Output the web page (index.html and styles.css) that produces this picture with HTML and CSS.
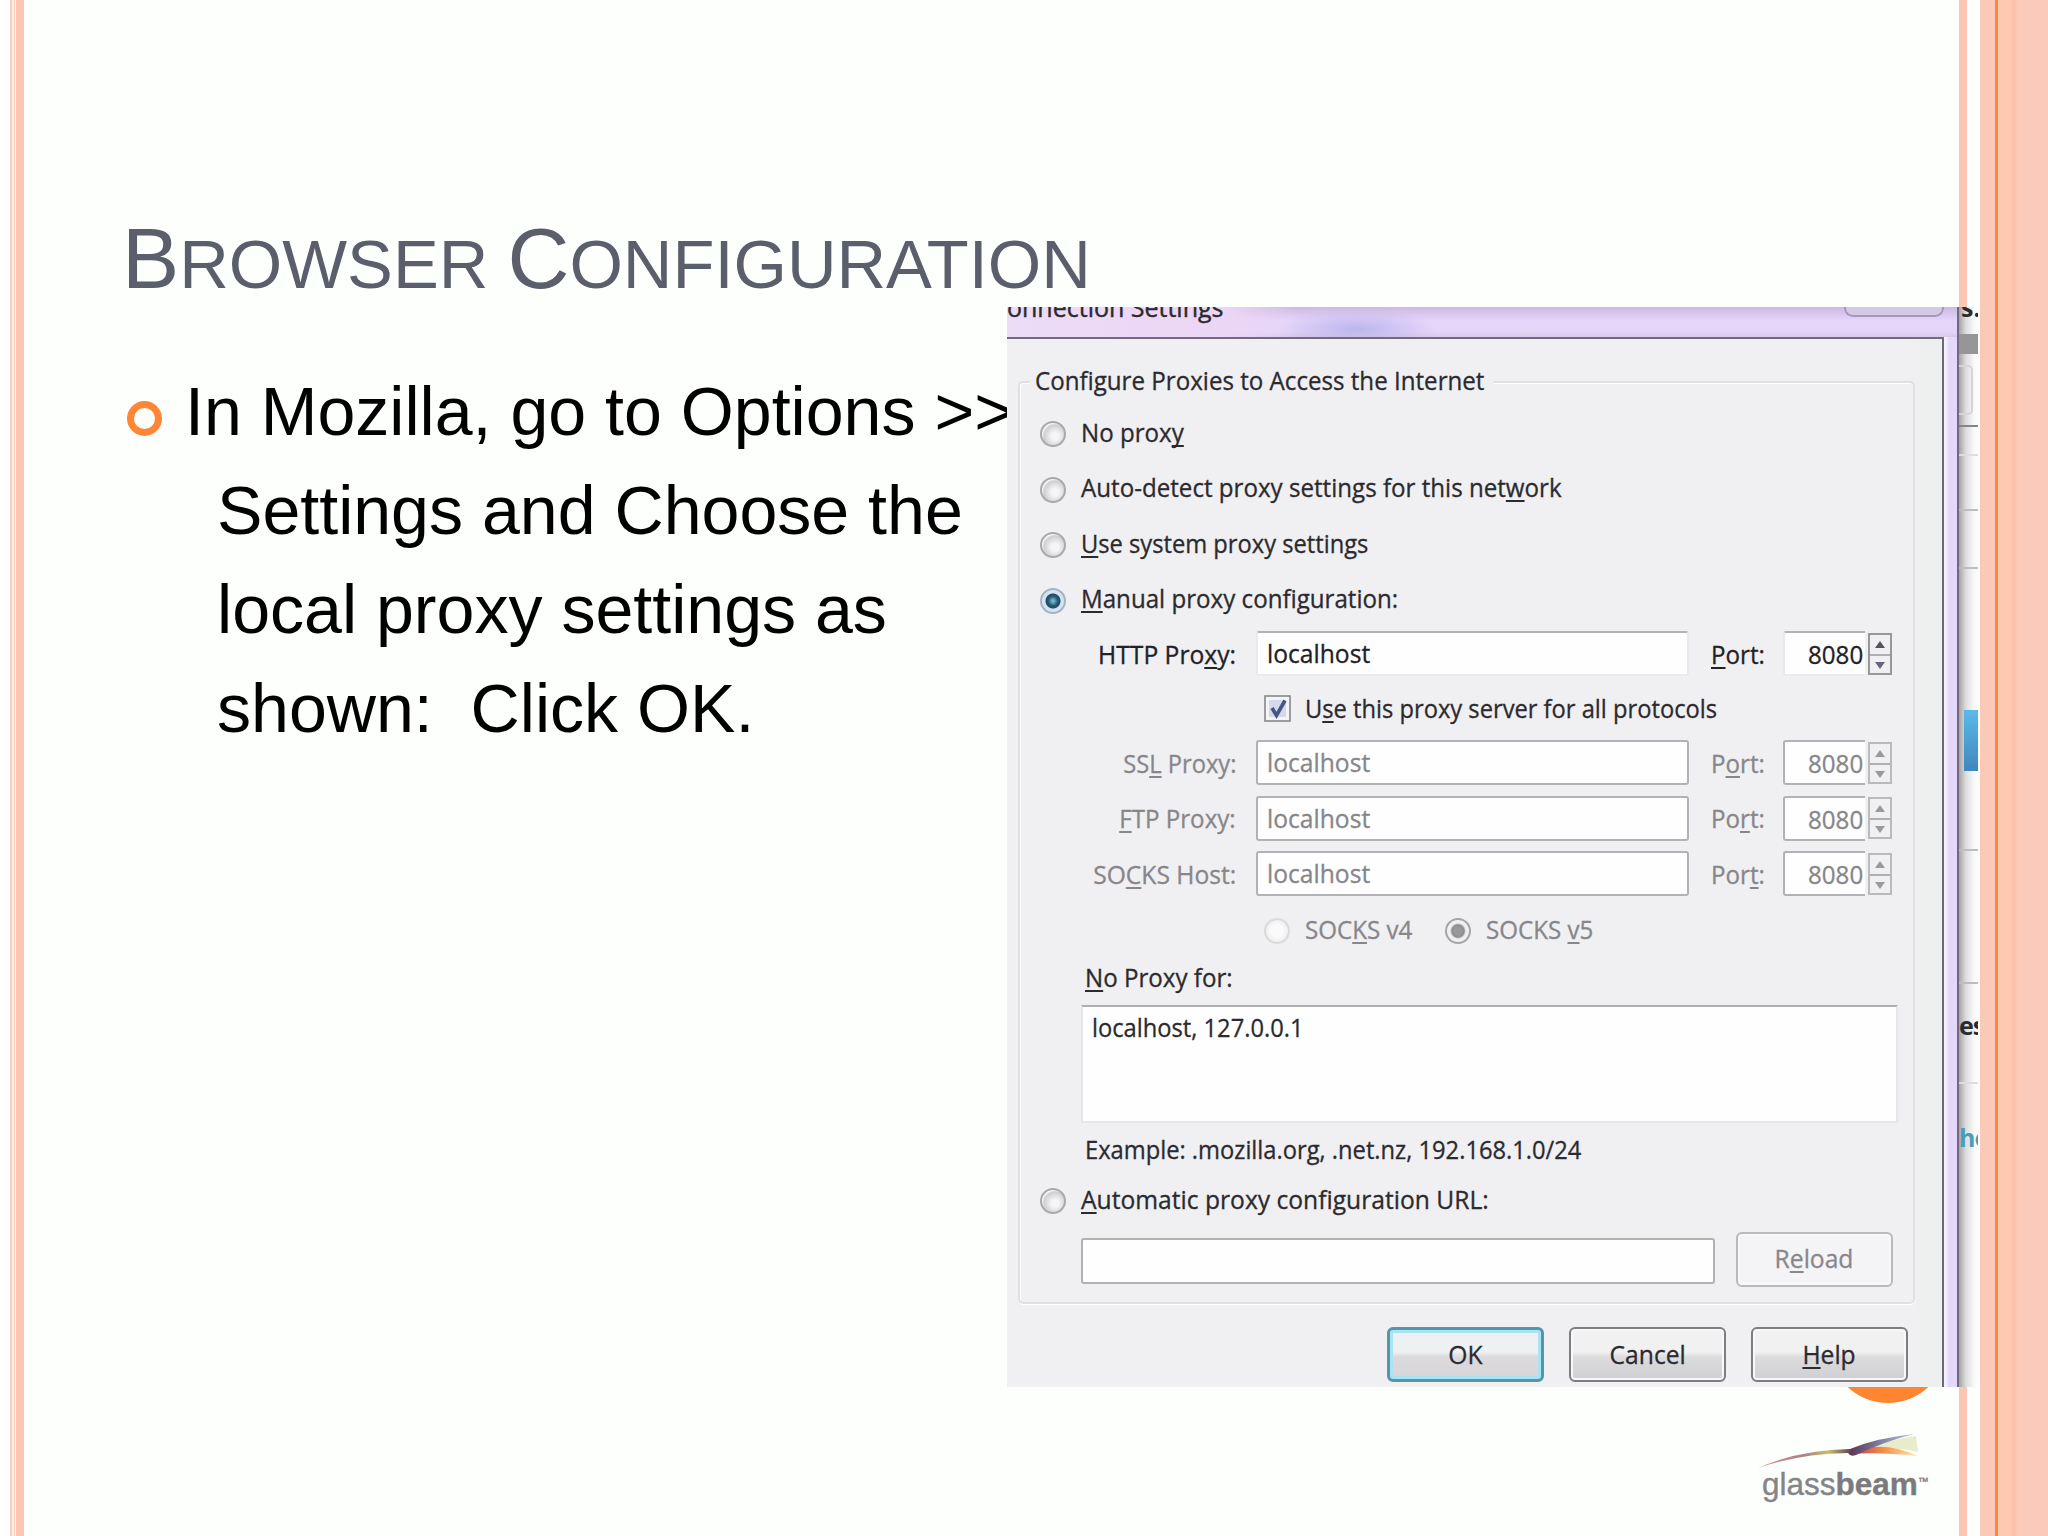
FILE: index.html
```html
<!DOCTYPE html>
<html lang="en">
<head>
  <meta charset="UTF-8" />
  <title>Browser Configuration</title>
  <link rel="stylesheet" href="styles.css">
</head>
<body>

  <div class="slide">
    <div class="edge-left"><i></i><i></i></div>

    <div class="content">
      <h1><b>B</b>ROWSER <b>C</b>ONFIGURATION</h1>
      <ul>
        <li>In Mozilla, go to Options &gt;&gt;<br>Settings and Choose the<br>local proxy settings as<br>shown:&nbsp; Click OK.</li>
      </ul>
    </div>

    <div class="edge-right"><i class="thin"></i><i class="band"></i><i class="line"></i><i class="band2"></i><i class="band3"></i></div>

    <div class="dot"></div>

    <div class="shot">
      <div class="window">
        <div class="titlebar"><span class="title">onnection Settings</span><span class="close"></span></div>
        <div class="client">
          <div class="group">
            <div class="legend"><span class="t">Configure Proxies to Access the Internet</span></div>
            <div class="row"><i class="radio"></i><span class="t">No prox<u>y</u></span></div>
            <div class="row"><i class="radio"></i><span class="t">Auto-detect proxy settings for this net<u>w</u>ork</span></div>
            <div class="row"><i class="radio"></i><span class="t narrow"><u>U</u>se system proxy settings</span></div>
            <div class="row"><i class="radio on"></i><span class="t"><u>M</u>anual proxy configuration:</span></div>

            <div class="row proxy active">
              <span class="label"><span class="t wide">HTTP Pro<u>x</u>y:</span></span>
              <div class="input"><span class="t wide">localhost</span></div>
              <span class="port"><span class="t"><u>P</u>ort:</span></span>
              <div class="num"><span class="t">8080</span></div>
              <div class="spin"><i></i><i></i></div>
            </div>
            <div class="row check">
              <svg class="box" viewBox="0 0 27 27"><rect x="1" y="1" width="25" height="25" fill="#f4f4f6" stroke="#85888f" stroke-width="1.6"/><rect x="5" y="5" width="17" height="17" fill="#d3d9e6"/><path d="M8 13l4.500 7.500L21 5.500" fill="none" stroke="#47538b" stroke-width="3.600"/></svg>
              <span class="t narrow">U<u>s</u>e this proxy server for all protocols</span>
            </div>
            <div class="row proxy">
              <span class="label"><span class="t narrow">SS<u>L</u> Proxy:</span></span>
              <div class="input"><span class="t wide">localhost</span></div>
              <span class="port"><span class="t">P<u>o</u>rt:</span></span>
              <div class="num"><span class="t">8080</span></div>
              <div class="spin"><i></i><i></i></div>
            </div>
            <div class="row proxy">
              <span class="label"><span class="t"><u>F</u>TP Proxy:</span></span>
              <div class="input"><span class="t wide">localhost</span></div>
              <span class="port"><span class="t">Po<u>r</u>t:</span></span>
              <div class="num"><span class="t">8080</span></div>
              <div class="spin"><i></i><i></i></div>
            </div>
            <div class="row proxy">
              <span class="label"><span class="t wide">SO<u>C</u>KS Host:</span></span>
              <div class="input"><span class="t wide">localhost</span></div>
              <span class="port"><span class="t">Por<u>t</u>:</span></span>
              <div class="num"><span class="t">8080</span></div>
              <div class="spin"><i></i><i></i></div>
            </div>
            <div class="row socks">
              <div class="option"><i class="radio faint"></i><span class="t">SOC<u>K</u>S v4</span></div>
              <div class="option"><i class="radio off-on"></i><span class="t">SOCKS <u>v</u>5</span></div>
            </div>

            <div class="row nofor"><span class="t"><u>N</u>o Proxy for:</span></div>
            <div class="textarea"><span class="t narrow">localhost, 127.0.0.1</span></div>
            <div class="row example"><span class="t narrow">Example: .mozilla.org, .net.nz, 192.168.1.0/24</span></div>
            <div class="row auto"><i class="radio"></i><span class="t wide"><u>A</u>utomatic proxy configuration URL:</span></div>
            <div class="row url">
              <div class="input"></div>
              <div class="btn disabled"><span class="t wide">R<u>e</u>load</span></div>
            </div>
          </div>
          <div class="buttons">
            <div class="btn default"><span class="t wide">OK</span></div>
            <div class="btn"><span class="t wide">Cancel</span></div>
            <div class="btn"><span class="t wide"><u>H</u>elp</span></div>
          </div>
        </div>
      </div>
      <!-- page behind the dialog -->
      <div class="behind">
        <div class="b-text">s.</div>
        <div class="b-bar"></div>
        <div class="b-box"></div>
        <div class="b-cell c1"></div>
        <div class="b-cell c2"></div>
        <div class="b-cell c3"></div>
        <div class="b-cell c4"></div>
        <div class="b-blue"></div>
        <div class="b-cell c5"></div>
        <div class="b-cell c6"></div>
        <div class="b-es">es</div>
        <div class="b-he">he</div>
      </div>
    </div>

    <div class="logo">
      <svg viewBox="0 0 170 40">
        <defs>
          <linearGradient id="beam" x1="0" x2="1">
            <stop offset="0" stop-color="#e58b86"/>
            <stop offset=".3" stop-color="#a98285"/>
            <stop offset=".45" stop-color="#c8bf6a"/>
            <stop offset=".6" stop-color="#5d3a55"/>
            <stop offset=".8" stop-color="#8583ab"/>
            <stop offset="1" stop-color="#b9c6e2"/>
          </linearGradient>
          <linearGradient id="fan" x1="0" x2="1">
            <stop offset="0" stop-color="#c23a50"/>
            <stop offset=".5" stop-color="#f5924a"/>
            <stop offset="1" stop-color="#fdeeb8"/>
          </linearGradient>
        </defs>
        <path d="M104 18Q130 8 158 4L160 20Q130 13 104 18Z" fill="#e9ecc8"/>
        <path d="M94 20Q125 8 160 24Q120 20 94 22Z" fill="url(#fan)"/>
        <path d="M0 36Q40 18 92 17Q118 6 156 2Q125 10 98 23Q92 25 90 21Q40 22 0 36Z" fill="url(#beam)"/>
      </svg>
      <div class="name">glass<b>beam</b><sup>™</sup></div>
    </div>
  </div>

</body>
</html>
```
FILE: styles.css
```css
* {
  box-sizing: border-box;
}

body {
  margin: 0;
  background: #fdfffd;
}

.slide {
  position: relative;
  width: 2048px;
  height: 1536px;
  overflow: hidden;
  display: flex;
  background: #fdfffd;
  font-family: "Liberation Sans", Arial, sans-serif;
}

.edge-left {
  display: flex;
  gap: 1px;
  width: 24px;
  padding-left: 10px;
  background: #fff;
}

.edge-left i {
  width: 5px;
  background: linear-gradient(90deg, #fdcdbb 0 2px, #fff0ea 2px 4px, #fdcdbb 4px);
}

.edge-left i + i {
  width: 8px;
  background: #fdc6b3;
}

.content {
  flex: 1;
  padding: 209px 0 0 101px;
}

h1 {
  margin: 0 0 0 -3px;
  height: 98px;
  line-height: 98px;
  font-weight: normal;
  font-size: 68.7px;
  color: #5b5f6c;
  white-space: nowrap;
}

h1 b {
  font-weight: normal;
  font-size: 85.8px;
}

ul {
  margin: 55px 0 0;
  padding: 0;
  list-style: none;
}

li {
  position: relative;
  padding-left: 92px;
  text-indent: -32px;
  font-size: 68.1px;
  line-height: 99px;
  color: #000;
  white-space: nowrap;
}

li::before {
  content: "";
  box-sizing: border-box;
  position: absolute;
  left: 2px;
  top: 39px;
  width: 35px;
  height: 35px;
  border: 7px solid #ff8637;
  border-radius: 50%;
}

.edge-right {
  display: flex;
  width: 89px;
}

.edge-right .thin {
  width: 8px;
  margin-right: 13px;
  background: #fdc6b3;
}

.edge-right .band {
  width: 15px;
  background: #fcc8b7;
}

.edge-right .line {
  width: 3px;
  background: #fb8740;
}

.edge-right .band2 {
  width: 14px;
  background: #fec9b1;
}

.edge-right .band3 {
  flex: 1;
  background: linear-gradient(90deg, #fcc0a5, #fccaba 7px);
}

.dot {
  position: absolute;
  left: 1829px;
  top: 1285px;
  width: 118px;
  height: 118px;
  border-radius: 50%;
  background: #ff8530;
}

/* dialog picture */
.shot {
  position: absolute;
  left: 1007px;
  top: 307px;
  width: 971px;
  height: 1080px;
  display: flex;
  overflow: hidden;
  font-family: "Open Sans", "Noto Sans", sans-serif;
  font-size: 25px;
  color: #2b2a2e;
}

.window {
  width: 952px;
  height: 1080px;
  padding-right: 13px;
  border-right: 2px solid #726a7c;
  background: linear-gradient(90deg, #f4f0fb 939px, #e3d8fb 942px);
}

.titlebar {
  display: flex;
  justify-content: space-between;
  height: 30px;
  margin-right: -13px;
  padding-right: 13px;
  overflow: hidden;
  background:
    linear-gradient(90deg, #ecdcf8 0, #ecd6f5 220px, transparent 290px),
    radial-gradient(ellipse 80px 20px at 350px 22px, #bcb6ec, transparent),
    linear-gradient(#cdb8e2 0, #e6d6fb 14px, #e4d6fa 24px, #d8cbe6 30px);
}

.title {
  margin-top: -19px;
  line-height: 38px;
  transform: scaleX(1);
  transform-origin: 0 0;
  -webkit-text-stroke: .4px;
  white-space: nowrap;
}

.close {
  width: 100px;
  height: 10px;
  border: 2px solid #a795c0;
  border-top: 0;
  border-radius: 0 0 9px 9px;
  background: #d5cae6;
}

.client {
  height: 1050px;
  padding: 42px 27px 0 11px;
  border-top: 2px solid #746a80;
  border-right: 2px solid #6f6879;
  background: linear-gradient(90deg, #f0eff1 97%, #ecf0ee);
}

.group {
  height: 923px;
  padding-left: 14px;
  border: 2px solid #e0dfe2;
  border-radius: 5px;
  box-shadow: inset 1px 1px #fff, 0 1px #fff;
  background: #f0eff1;
}

.t {
  display: inline-block;
  white-space: nowrap;
  transform: scaleX(.965);
  transform-origin: 0 50%;
  -webkit-text-stroke: .3px;
}

.t.narrow {
  transform: scaleX(.948);
}

.t.wide {
  transform: scaleX(.985);
}

.t u {
  text-underline-offset: 3px;
  text-decoration-thickness: 2px;
  text-decoration-skip-ink: none;
}

.legend {
  width: 464px;
  height: 38px;
  margin: -22px 0 5px -4px;
  padding-left: 5px;
  line-height: 38px;
  background: #f0eff1;
}

.row {
  display: flex;
  align-items: center;
  height: 55.5px;
}

.radio {
  flex: none;
  width: 26px;
  height: 26px;
  margin: 5px 15px 0 6px;
  border: 2px solid #a9a9ad;
  border-radius: 50%;
  background: radial-gradient(circle at 60% 60%, #f5f5f5 20%, #cfcfd1 60%, #f4f4f4 70%);
}

.radio.on {
  border-color: #a6b3c2;
  background: radial-gradient(circle, #74b6c9 0 1px, #1d5672 5px, #294c68 7px, #d4e4f5 8px);
}

.radio.faint {
  border-color: #dad9dc;
  background: radial-gradient(circle, #fafafa 40%, #e5e5e7);
}

.radio.off-on {
  border-color: #a6a5a9;
  background: radial-gradient(circle, #98989b 0 4px, #8b8b90 6px, #f0eff1 8px);
}

.proxy {
  color: #87868a;
}

.active {
  color: #222126;
}

.label {
  width: 202px;
  margin-right: 20px;
  text-align: right;
}

.label .t,
.num .t {
  transform-origin: 100% 50%;
}

.input {
  width: 433px;
  height: 45px;
  padding-left: 9px;
  line-height: 41px;
  border: 2px solid #b2b1b6;
  border-radius: 3px;
  background: #fefefe;
}

.active .input,
.active .num {
  border-color: #b2b1b6 #eae9ed #eae9ed;
}

.port {
  width: 72px;
  margin-left: 22px;
}

.num {
  width: 82px;
  height: 45px;
  padding-right: 2px;
  line-height: 43px;
  text-align: right;
  border: 2px solid #b2b1b6;
  border-right: 0;
  border-radius: 3px 0 0 3px;
  background: #fefefe;
}

.spin {
  width: 24px;
  height: 42px;
  margin-left: 3px;
  border: 2px solid #bab9bd;
}

.active .spin {
  border-color: #98979c;
}

.spin i {
  display: flex;
  justify-content: center;
  height: 19px;
  padding-top: 6px;
}

.spin i + i {
  border-top: 2px solid #b0afb3;
}

.spin i::before {
  content: "";
  width: 0;
  height: 0;
  border: 5px solid transparent;
  border-top: 0;
  border-bottom: 7px solid #9a999e;
}

.spin i + i::before {
  border-top: 7px solid #9a999e;
  border-bottom: 0;
}

.active .spin i::before {
  border-bottom-color: #55545c;
}

.active .spin i + i::before {
  border-top-color: #66648a;
}

.check {
  height: 53.5px;
  padding-left: 230px;
}

.box {
  width: 27px;
  height: 27px;
  margin-right: 14px;
}

.socks {
  height: 54px;
  padding-left: 224px;
  color: #87868a;
}

.option {
  display: flex;
  align-items: center;
  width: 181px;
}

.nofor {
  height: 43px;
  padding-left: 51px;
}

.textarea {
  width: 817px;
  height: 118px;
  margin: 6px 0 0 47px;
  padding: 3px 0 0 9px;
  border: 2px solid #e7e6ea;
  border-top-color: #aeadb2;
  background: #fefefe;
}

.example {
  height: 52px;
  padding-left: 51px;
}

.auto {
  height: 48px;
}

.url {
  height: 78px;
  padding-left: 47px;
  align-items: flex-start;
}

.url .input {
  width: 634px;
  height: 46px;
  margin: 15px 21px 0 0;
}

.btn {
  display: flex;
  align-items: center;
  justify-content: center;
  width: 157px;
  height: 55px;
  padding-bottom: 2px;
  border: 2px solid #7e7d82;
  border-radius: 6px;
  box-shadow: inset 0 0 0 2px #f8f8f9;
  background: linear-gradient(#f1f1f2 45%, #dcdcde 55%, #cfcfd2);
}

.btn .t {
  transform-origin: 50% 50%;
}

.url .btn {
  margin-top: 9px;
}

.btn.disabled {
  color: #88878b;
  border-color: #b9b8bc;
  background: #f4f3f5;
}

.btn.default {
  border: 3px solid #5596ad;
  box-shadow: inset 0 0 0 3px #a9e4f4;
  background: linear-gradient(#eef1f1 45%, #dcdadc 55%, #d6d5d8);
}

.buttons {
  display: flex;
  justify-content: flex-end;
  gap: 25px;
  margin: 23px 7px 0 0;
}

/* strip of the page behind the dialog */
.behind {
  flex: 1;
  overflow: hidden;
  background: linear-gradient(90deg, #a4a4a4, #dedede 7px, #f8f8f8 15px, #fdfdfd);
}

.b-text {
  height: 27px;
  padding-left: 2px;
  line-height: 0;
  font-weight: bold;
}

.b-bar {
  height: 20px;
  background: #969696;
}

.b-box {
  width: 14px;
  height: 50px;
  margin-top: 11px;
  border: 2px solid #d5d5d5;
  border-left: 0;
  border-radius: 0 5px 5px 0;
}

.b-cell {
  border-bottom: 2px solid #bdbdbd;
}

.c1 { height: 12px; border-color: #858585; }
.c2 { height: 29px; border-color: #dedede; }
.c3 { height: 55px; }
.c4 { height: 58px; }
.c5 { height: 80px; }
.c6 { height: 133px; }

.b-blue {
  height: 61px;
  margin: 141px 0 0 5px;
  background: linear-gradient(#5bb9ea, #4087bb);
}

.b-es,
.b-he {
  font-weight: bold;
  line-height: 34px;
  letter-spacing: -1px;
}

.b-es {
  height: 100px;
  padding-top: 24px;
  border-bottom: 2px solid #dcdcdc;
}

.b-he {
  padding-top: 36px;
  color: #4b9cb9;
}

.logo {
  position: absolute;
  left: 1758px;
  top: 1432px;
  width: 172px;
}

.logo svg {
  display: block;
  width: 170px;
  height: 40px;
}

.name {
  margin-top: -7px;
  padding-left: 4px;
  font-size: 31.5px;
  line-height: 38px;
  color: #858587;
  -webkit-text-stroke: .4px;
  white-space: nowrap;
}

.name b {
  color: #7b7b7d;
}

.name sup {
  font-size: 11px;
  line-height: 0;
  vertical-align: 10px;
}
```
